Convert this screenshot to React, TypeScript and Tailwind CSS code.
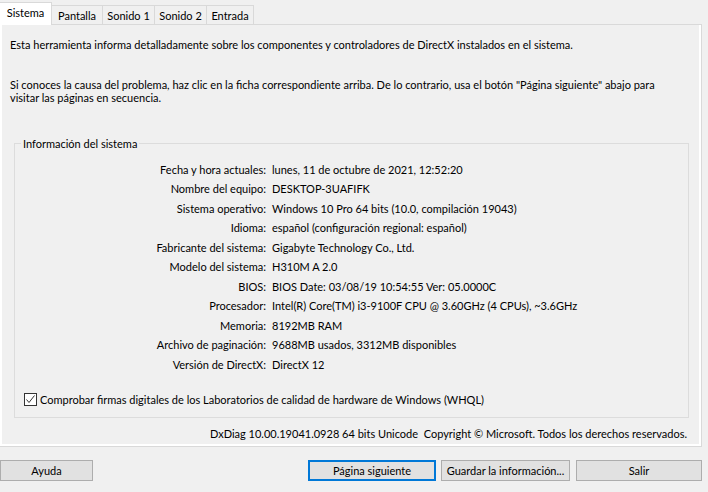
import React from 'react';

const TABS = ['Pantalla', 'Sonido 1', 'Sonido 2', 'Entrada'];
const TAB_WIDTHS = ['w-[51px]', 'w-[52px]', 'w-[52px]', 'w-[47px]'];

const ROWS: [string, string][] = [
  ['Fecha y hora actuales:', 'lunes, 11 de octubre de 2021, 12:52:20'],
  ['Nombre del equipo:', 'DESKTOP-3UAFIFK'],
  ['Sistema operativo:', 'Windows 10 Pro 64 bits (10.0, compilación 19043)'],
  ['Idioma:', 'español (configuración regional: español)'],
  ['Fabricante del sistema:', 'Gigabyte Technology Co., Ltd.'],
  ['Modelo del sistema:', 'H310M A 2.0'],
  ['BIOS:', 'BIOS Date: 03/08/19 10:54:55 Ver: 05.0000C'],
  ['Procesador:', 'Intel(R) Core(TM) i3-9100F CPU @ 3.60GHz (4 CPUs), ~3.6GHz'],
  ['Memoria:', '8192MB RAM'],
  ['Archivo de paginación:', '9688MB usados, 3312MB disponibles'],
  ['Versión de DirectX:', 'DirectX 12'],
];

function Button({ label, className }: { label: string; className: string }) {
  return (
    <button className={`h-[21px] bg-[#e1e1e1] flex items-center justify-center whitespace-nowrap leading-[15px] ${className}`}>
      {label}
    </button>
  );
}

export default function App() {
  return (
    <div className="w-[708px] h-[492px] bg-[#f0f0f0] text-black text-[11px] font-['Lato','Liberation_Sans',Arial,sans-serif] overflow-hidden">
      {/* Tabs */}
      <div className="h-[24px] flex items-end">
        <div className="relative z-10 ml-[-1px] w-[53px] h-[23px] mb-[-1px] bg-white border border-b-0 border-[#d9d9d9] flex items-center justify-center pb-[1px]">
          Sistema
        </div>
        {TABS.map((t, i) => (
          <div
            key={t}
            className={`${TAB_WIDTHS[i]} h-[19px] border-t border-r border-[#d9d9d9] flex items-center justify-center pt-[2px]`}
          >
            {t}
          </div>
        ))}
      </div>

      {/* Tab page */}
      <div className="ml-[-1px] w-[703px] h-[423px] border border-[#d9d9d9] bg-white px-[2px] pb-[2px]">
        <div className="h-full bg-[#f0f0f0] flex flex-col">
          <p className="mt-[12px] pl-[8px] leading-[15px]">
            Esta herramienta informa detalladamente sobre los componentes y controladores de DirectX instalados en el sistema.
          </p>
          <p className="mt-[26px] pl-[8px] leading-[13px] w-[670px]">
            Si conoces la causa del problema, haz clic en la ficha correspondiente arriba. De lo contrario, usa el botón "Página siguiente" abajo para visitar las páginas en secuencia.
          </p>

          <fieldset className="mt-[32px] ml-[12px] w-[675px] h-[282px] border border-[#dcdcdc]">
            <legend className="ml-[6px] px-[2px] leading-[15px]">Información del sistema</legend>
            <div className="pt-[9px] grid grid-cols-[251px_1fr] gap-x-[6px]">
              {ROWS.map(([k, v]) => (
                <React.Fragment key={k}>
                  <div className="h-[19.5px] flex items-center justify-end whitespace-nowrap">{k}</div>
                  <div className="h-[19.5px] flex items-center whitespace-nowrap">{v}</div>
                </React.Fragment>
              ))}
            </div>
            <div className="mt-[17px] pl-[9px] flex items-center gap-[3px] leading-[15px]">
              <span className="w-[13px] h-[13px] border border-[#333333] bg-white flex items-center justify-center">
                <svg width="11" height="11" viewBox="0 0 11 11">
                  <polyline points="1.5,5.5 4,8.5 9.5,1.5" fill="none" stroke="#333333" strokeWidth="1" />
                </svg>
              </span>
              <span>Comprobar firmas digitales de los Laboratorios de calidad de hardware de Windows (WHQL)</span>
            </div>
          </fieldset>

          <p className="mt-[8px] pr-[12px] text-right leading-[15px] whitespace-pre">
            DxDiag 10.00.19041.0928 64 bits Unicode  Copyright © Microsoft. Todos los derechos reservados.
          </p>
        </div>
      </div>

      {/* Buttons */}
      <div className="mt-[13px] flex">
        <Button label="Ayuda" className="w-[93px] border border-[#adadad]" />
        <Button label="Página siguiente" className="ml-[215px] w-[128px] border-2 border-[#0078d7]" />
        <Button label="Guardar la información..." className="ml-[5px] w-[129px] border border-[#adadad]" />
        <Button label="Salir" className="ml-[6px] w-[126px] border border-[#adadad]" />
      </div>
    </div>
  );
}
